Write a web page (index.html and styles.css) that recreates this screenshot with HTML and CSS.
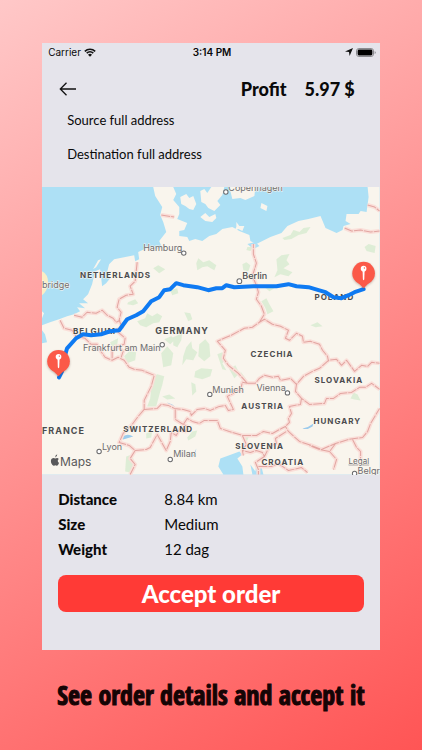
FILE: index.html
```html
<!DOCTYPE html>
<html lang="en">
<head>
	<meta charset="UTF-8">
	<meta name="viewport" content="width=device-width, initial-scale=1">
	<title>Order details</title>
	<link rel="stylesheet" href="styles.css">
</head>
<body>
	<main class="screen">
		<div class="status-bar">
			<div class="status-left">
				<span>Carrier</span>
				<svg class="wifi" viewBox="0 0 12 9" aria-hidden="true">
					<path d="M.8 3.3a7.6 7.6 0 0 1 10.4 0M2.7 5.2a4.8 4.8 0 0 1 6.6 0" fill="none" stroke="#111" stroke-width="1.6"/>
					<path d="M6 8.8 4 6.8a2.9 2.9 0 0 1 4 0z" fill="#111"/>
				</svg>
			</div>
			<div class="status-time">3:14 PM</div>
			<div class="status-right">
				<svg class="location" viewBox="0 0 8 8" aria-hidden="true"><path d="M8 0 4.6 8 4 4 0 3.4z" fill="#111"/></svg>
				<svg class="battery" viewBox="0 0 20 9" aria-hidden="true">
					<rect x=".5" y=".5" width="17" height="8" rx="2.4" fill="none" stroke="#8b8b90"/>
					<rect x="1.6" y="1.6" width="14.8" height="5.8" rx="1.3" fill="#000"/>
					<path d="M18.7 3v3q1-.5 1-1.500t-1-1.500z" fill="#8b8b90"/>
				</svg>
			</div>
		</div>

		<header class="top">
			<button class="back" type="button" aria-label="Back">
				<svg viewBox="0 0 17 14" aria-hidden="true"><path d="M16.500 7H1M7 .7.800 7 7 13.300" fill="none" stroke="#111" stroke-width="1.300"/></svg>
			</button>
			<div class="profit"><span>Profit</span><span>5.97 $</span></div>
		</header>
		<div class="addresses">
			<p>Source full address</p>
			<p>Destination full address</p>
		</div>

		<svg class="map" viewBox="0 0 337 287" role="img" aria-label="Route map">
			<rect class="sea" width="337" height="287"/>
			<!-- mainland -->
			<path class="land" d="M0 156 5 155 3 147 0 143V138L8 135 17 132 25 129 32 127 38 124 35 120 43 121 37 116 46 116 41 112 46 107 50 97 53 84 58 82 59 90 60 99 64 96 68 91 65 85 67 77 72 72 82 70 92 68 93 74 97 72 96 65 107 60 113 62 120 61 117 54 124 45 121 35 118 28 120 20 113 9 111 0H131L134 7 131 13 137 20 137 27 135 32 145 36 142 43 137 44 137 49 145 50 147 54 153 52 160 54 167 49 174 47 180 42 190 40 197 44 207 48 208 54 214 57 228 50 239 46 245 39 256 34 266 32 278 29 283 41 294 46 300 43 301 39 308 37 303 34 304 27 316 27 318 24 324 25 326 10 325 0H337V287H221L219 279 214 276 213 284 208 277 210 287H201L200 279 195 271 200 267 197 264 189 267 178 271 176 279 181 287H0z"/>
			<!-- islands and Sweden -->
			<path class="land" d="M138 10 144 7 147 11 151 9 154 17 151 23 147 22 143 19 139 17zM158 4 162 2 165 6 169 0 182 0 180 8 175 14 178 18 172 24 166 21 163 17 159 15zM158 30 163 26 167 30 173 27 174 31 170 35 163 34zM187 0H213L212 9 203 13 198 11 190 12zM219 16 225 19 224 24 218 21zM194 35 197 39 202 39 200 44 196 42 192 44 194 40zM51 82 56 73 59 72 54 80z"/>
			<path class="sea" d="M205 57 213 55 217 59 211 62z"/>
			<path class="uk" d="M0 84Q6 87 6 95T0 108z"/>
			<path class="land" d="M0 124 2 126 0 131z"/>

			<path class="wood" d="M86 115l7-3 3 4-5 2-6-1zM95 134l8-3 2-5 5 3 5-3 5 3-3 6-6 1-7 4-6-2zM111 81l5-3 7 4-6 4zM128 103l7-2 1 5-6 2zM154 76l2-5 5 4 6-2 7 5-2 5-7-4-5 1-5 3zM200 77l4-2 4 3-2 6-5-1zM205 60l6 0-3 4-4-1zM142 125l6 1 2 6-4 2zM240 51l8-3 3-5 6 2 4-4 7-1-4 6-8 2-7 4-7 1zM234 72l5-4 8-1-3 6 3 4-6 4 9 4-4 4-8-2-6 3 3-7zM222 100l5-2 5 3-5 3zM219 114l5-3 3 6 4 7-6 3-2-6zM322 60l4-3 7 2-1 7-8-2zM268 138l7-3 5 4-7 1z"/>
			<path class="wood" d="M110 190l5-3 7 2-2 9-2 6-4 15-9 0 3-8 1-10zM82 169l5-5 7 1-1 8-8 3zM119 166l6-7 6 7-2 12-8 2zM122 152l7-3 4 3-5 5zM131 150l9-4-1 7-4 7-4-2zM144 160l5-6 1 7 5 4-4 8-7-1-4 6 1-9zM157 157l6-5 4 5 1 12-6 5-6-5zM153 184l6-3 11 1-2 7-8 3-8-2zM149 195l4 2 1 7-4 4zM175 167l5-2 4 7-4 4 4 7-4-1zM187 182l6-4 4 8-5 5zM198 184l6 8-3 1zM120 209l7-2 6 4-8 1zM145 250l5-6 5-1-2 6-7 4zM104 246l6-3-1 7-5 1zM84 269l6-2 2 7-4 11-5-1zM201 251l6-3-3 7zM308 211l3-6 4 2 3 6-6-1zM68 155l8-4-1 7-5 2z"/>
			<path class="lake" d="M125 215l5 2 6 5-8-4zM150 270l4-9-1 6zM260 241q6-1 11-5l-1 3q-6 4-10 2zM79 250q6-5 12-1l-10 3z"/>

			<defs>
				<path id="borders" d="M95 75 93 94 88 99 91 107 84 108 77 112 75 120 79 125 77 133 80 140 74 143M32 128 40 130 45 125 54 126 60 123 65 128 71 131 74 135 78 133M18 133 22 141 30 143 34 149 43 151 49 157 55 157 58 163 63 170 70 173 76 170 82 173 87 180 92 182 100 183 112 188 109 199 102 213 102 222M75 144 83 151 82 157 76 159 81 164 79 170M70 171 70 163 75 158M102 222 115 221 119 217 126 218 132 221 141 222 148 224 149 228 155 222 162 221 168 223 177 219 183 218 186 223 191 222 185 209 191 206 192 203 198 203 200 195 205 196M205 196 196 186 186 178 181 171 183 163 175 154 184 150 189 148 202 141 210 140 217 135 222 132 230 137 238 139 246 143 243 151 247 153 254 146 260 149 261 155 268 154 277 157 280 163 285 169 286 174M217 135 222 127 219 119 214 112 216 105 214 98 210 89 214 76 211 67 211 57M119 28 132 30M205 196 213 196 217 191 222 188 230 190 236 189 238 193 248 191 254 197 261 189 270 184 277 181 286 173 294 172 299 178 304 173 312 184 319 178 325 179 329 175 337 176M254 197 253 204 259 211 267 217 282 216 284 211 291 211 298 206 309 205 317 200 323 200 329 196 337 202M259 211 258 217 247 219 249 226 246 231 247 235 243 239M133 222 133 232 141 237 145 231 150 234 157 236 162 233 175 233 178 241 187 244 200 248 214 248 221 244 230 246 239 241 243 239 246 244 257 254 269 258 279 262 293 256 306 252 320 250 325 244 328 236 337 221M102 222 96 229 90 237 81 246 77 255 87 258 93 263 104 262 108 260 115 247 124 263 128 254 129 245 134 248 137 242 143 244 145 239 141 237M93 263 88 271 93 277 88 287M200 248 204 257 200 263 208 265 214 263 220 265 222 269 227 259 234 256 233 251 244 244M200 263 201 268M222 269 213 275 216 282 216 287M216 279 229 279 236 276 246 283 259 280 265 285M293 256 287 264 294 272 291 282M310 252 314 260 318 264 318 273M287 264 277 262 267 258M302 41 309 44 318 43 328 45 337 44M325 18 332 20 337 24"/>
			</defs>
			<use href="#borders" class="border-glow"/>
			<use href="#borders" class="border-line"/>

			<g class="country">
				<text x="38" y="91">NETHERLANDS</text>
				<text x="31" y="147">BELGIUM</text>
				<text x="113" y="147" class="large">GERMANY</text>
				<text x="272" y="113">POLAND</text>
				<text x="208" y="170">CZECHIA</text>
				<text x="272" y="196">SLOVAKIA</text>
				<text x="0" y="247" class="large">FRANCE</text>
				<text x="81" y="245">SWITZERLAND</text>
				<text x="199" y="222">AUSTRIA</text>
				<text x="271" y="237">HUNGARY</text>
				<text x="193" y="262">SLOVENIA</text>
				<text x="219" y="277">CROATIA</text>
			</g>
			<g class="city">
				<text x="186" y="4">Copenhagen</text>
				<text x="101" y="64">Hamburg</text>
				<text x="0" y="101">bridge</text>
				<text x="200" y="92" class="capital">Berlin</text>
				<text x="41" y="164">Frankfurt am Main</text>
				<text x="170" y="206">Munich</text>
				<text x="214" y="204">Vienna</text>
				<text x="60" y="263">Lyon</text>
				<text x="131" y="270">Milan</text>
				<text x="315" y="286">Belgrade</text>
				<text x="306" y="276" class="legal">Legal</text>
			</g>
			<g class="dots">
				<circle cx="183.500" cy="5" r="2.200"/>
				<circle cx="141.500" cy="66" r="2.200"/>
				<circle cx="197" cy="94" r="2.400"/>
				<circle cx="120" cy="157.500" r="2.200"/>
				<circle cx="167.500" cy="207" r="2.200"/>
				<circle cx="245" cy="205.500" r="2.200"/>
				<circle cx="57" cy="264" r="2.200"/>
				<circle cx="128" cy="272" r="2.200"/>
				<circle cx="312" cy="286" r="2.200"/>
			</g>

			<path class="route" d="M17 190 20 184 22 172 25 161 34 151 41 147 49 148 59 147 68 144 77 143 85 132 94 128 101 124 109 114 117 110 122 103 128 102 134 96 141 98 155 100 166 103 174 101 180 101 184 98 192 100 211 99 234 99 246 97 254 99 266 100 276 103 283 105 291 110 299 111 306 108 312 105 321 102"/>

			<g id="pins">
				<g class="pin" transform="translate(16.500 174)">
					<path d="M-6 9 0 15 6 9z"/><circle r="11.300"/>
					<path class="pin-stem" d="M-1-2.500h2L.700 6Q0 8-.700 6z"/><circle class="pin-head" cy="-4.500" r="2.800"/><circle cx=".8" cy="-5.200" r=".7"/>
				</g>
				<g class="pin" transform="translate(321 86)">
					<path d="M-6 9 0 15 6 9z"/><circle r="11.300"/>
					<path class="pin-stem" d="M-1-2.500h2L.700 6Q0 8-.700 6z"/><circle class="pin-head" cy="-4.500" r="2.800"/><circle cx=".8" cy="-5.200" r=".7"/>
				</g>
			</g>

			<path class="apple" d="M13.200 270Q13 267.700 15.200 266.800 15.300 269.200 13.200 270M17 275.500Q15.800 278.600 14.700 278.200 13.300 277.500 12 278.200 10.500 278.700 9.300 275.800 8.200 272.500 10 271 11.500 270 13.200 270.900 15.800 269.800 16.700 271.400 14.600 273.300 17 275.500z"/>
			<text class="maps-logo" x="18" y="278">Maps</text>
		</svg>

		<section class="details">
			<dl>
				<dt>Distance</dt><dd>8.84 km</dd>
				<dt>Size</dt><dd>Medium</dd>
				<dt>Weight</dt><dd>12 dag</dd>
			</dl>
			<button class="accept" type="button">Accept order</button>
		</section>
	</main>
	<p class="caption">See order details and accept it</p>
</body>
</html>
```
FILE: styles.css
```css
* {
	box-sizing: border-box;
}

body {
	margin: 0;
	padding: 43px 10% 36px;
	min-height: 100vh;
	background: linear-gradient(150deg, #ffc8c8 0%, #ff5555 100%);
	color: #090909;
	font-family: Lato, "Open Sans", sans-serif;
}

p, dl, dd {
	margin: 0;
}

button {
	border: 0;
	font-family: inherit;
	cursor: pointer;
}

.screen {
	background: #e5e4eb;
	padding-bottom: 38px;
}

.status-bar {
	display: grid;
	grid-template-columns: 1fr auto 1fr;
	align-items: center;
	height: 18px;
	padding: 0 4px 0 6px;
	font: 10px/18px Inter, sans-serif;
}

.status-left, .status-right {
	display: flex;
	align-items: center;
	gap: 3px;
}

.status-right {
	justify-content: flex-end;
}

.status-time {
	font-weight: 600;
}

.wifi { width: 12px; height: 9px; }
.location { width: 8px; height: 8px; }
.battery { width: 20px; height: 9px; }

.top {
	display: flex;
	justify-content: space-between;
	align-items: center;
	height: 46px;
	padding: 10px 25px 0 17px;
}

.back {
	display: flex;
	padding: 0;
	background: none;
}

.back svg {
	width: 18px;
	height: 14px;
}

.profit {
	display: flex;
	gap: 18px;
	font-size: 18px;
	font-weight: 900;
}

.addresses {
	display: grid;
	gap: 14px;
	padding: 3px 25px 23px;
	font-size: 13px;
	line-height: 20px;
}

.map {
	display: block;
	width: 100%;
	height: auto;
	font-family: Inter, sans-serif;
}

.sea { fill: #ade0f5; }
.land { fill: #f9f5ed; }
.uk { fill: #fbedc5; }
.wood { fill: #d7ebcf; opacity: .8; }
.lake { fill: #9dcbec; }

.border-glow, .border-line {
	fill: none;
	stroke-linejoin: round;
}

.border-glow {
	stroke: #fadfd9;
	stroke-width: 4px;
}

.border-line {
	stroke: #e2a5a1;
	stroke-width: 1px;
	stroke-dasharray: 9 1;
}

.country text, .city text {
	paint-order: stroke;
	stroke: #f9f5ed;
	stroke-width: 1px;
}

.country {
	fill: #4b4b4d;
	font-size: 8px;
	font-weight: 700;
	letter-spacing: 1px;
}

.country .large {
	font-size: 9px;
}

.city {
	fill: #6e6d70;
	font-size: 9px;
}

.city .capital {
	fill: #4b4b4d;
	font-weight: 500;
}

.city .legal {
	font-size: 8px;
	text-decoration: underline;
}

.dots {
	fill: #fff;
	stroke: #69696b;
	stroke-width: 1px;
}

.route {
	fill: none;
	stroke: #0f7af2;
	stroke-width: 4px;
	stroke-linecap: round;
	stroke-linejoin: round;
}

.pin {
	fill: #fb5948;
	filter: drop-shadow(0 1px 1px rgba(80, 30, 20, .3));
}

.pin .pin-head, .pin .pin-stem {
	fill: #fff;
}

.apple, .maps-logo {
	fill: #58585a;
}

.maps-logo {
	font-size: 12px;
}

.details {
	padding: 12px 16px 0;
}

.details dl {
	display: grid;
	grid-template-columns: 106px 1fr;
	font-size: 15px;
	line-height: 25px;
}

.details dt {
	font-weight: 900;
}

.accept {
	display: block;
	width: 100%;
	margin-top: 13px;
	padding: 0;
	border-radius: 8px;
	background: #ff3a36;
	color: #fff;
	font-size: 24px;
	line-height: 37px;
	font-weight: 900;
}

.caption {
	margin-top: 29px;
	color: #150405;
	font: bold 26px/32px Impact, "Liberation Sans Narrow", "Open Sans Condensed", sans-serif;
	text-align: center;
	white-space: nowrap;
	-webkit-text-stroke: 1px #150405;
}
```
